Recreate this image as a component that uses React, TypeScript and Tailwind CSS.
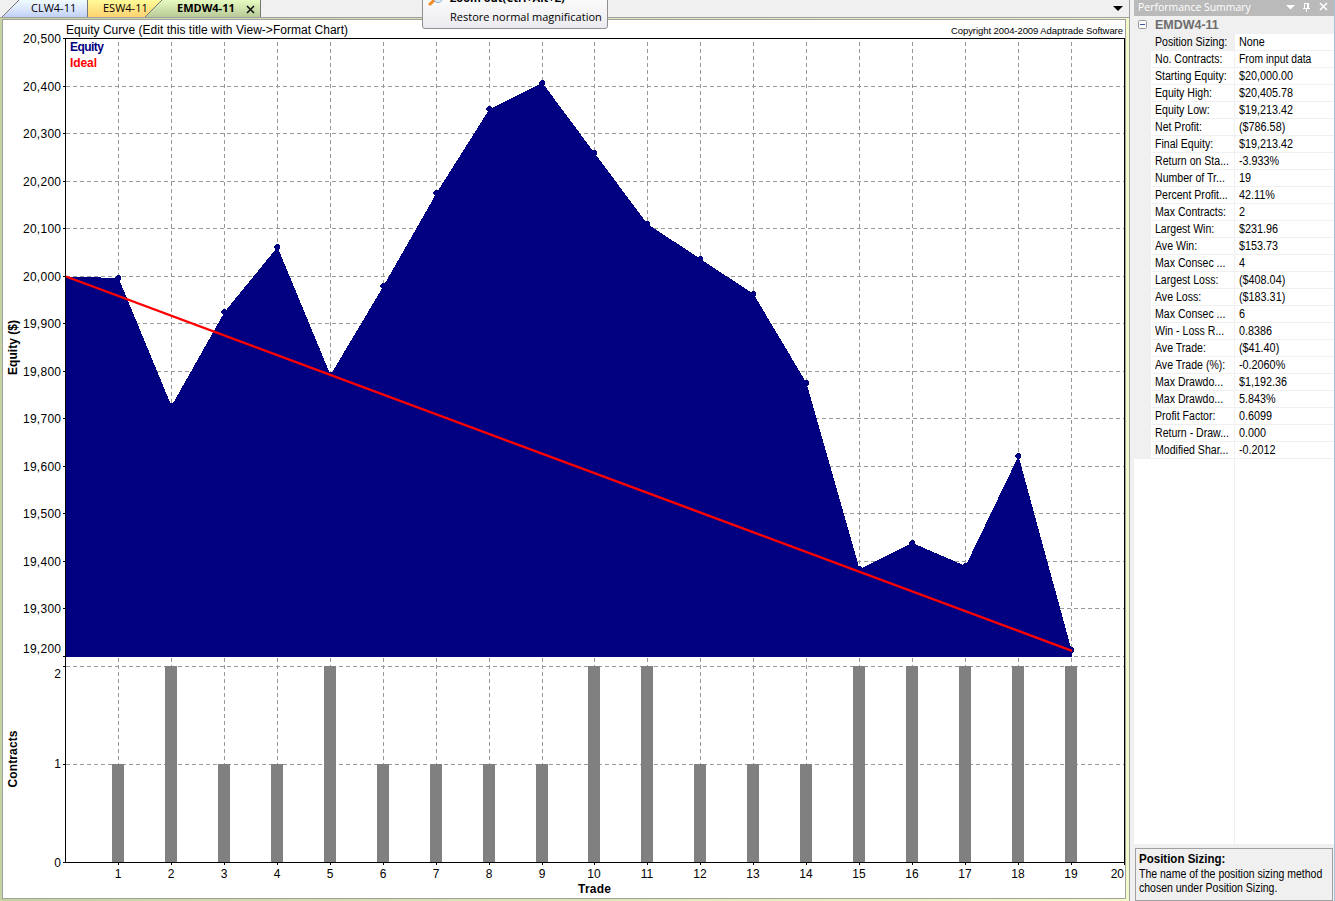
import React from 'react';

interface Metric {
  label: string;
  value: string;
}

const metrics: Metric[] = [
  { label: 'Position Sizing:', value: 'None' },
  { label: 'No. Contracts:', value: 'From input data' },
  { label: 'Starting Equity:', value: '$20,000.00' },
  { label: 'Equity High:', value: '$20,405.78' },
  { label: 'Equity Low:', value: '$19,213.42' },
  { label: 'Net Profit:', value: '($786.58)' },
  { label: 'Final Equity:', value: '$19,213.42' },
  { label: 'Return on Sta...', value: '-3.933%' },
  { label: 'Number of Tr...', value: '19' },
  { label: 'Percent Profit...', value: '42.11%' },
  { label: 'Max Contracts:', value: '2' },
  { label: 'Largest Win:', value: '$231.96' },
  { label: 'Ave Win:', value: '$153.73' },
  { label: 'Max Consec ...', value: '4' },
  { label: 'Largest Loss:', value: '($408.04)' },
  { label: 'Ave Loss:', value: '($183.31)' },
  { label: 'Max Consec ...', value: '6' },
  { label: 'Win - Loss R...', value: '0.8386' },
  { label: 'Ave Trade:', value: '($41.40)' },
  { label: 'Ave Trade (%):', value: '-0.2060%' },
  { label: 'Max Drawdo...', value: '$1,192.36' },
  { label: 'Max Drawdo...', value: '5.843%' },
  { label: 'Profit Factor:', value: '0.6099' },
  { label: 'Return - Draw...', value: '0.000' },
  { label: 'Modified Shar...', value: '-0.2012' },
];

// y position of the equity curve after each trade
const equity = [
  276.5, 278, 406, 312, 247, 375, 286, 193, 109, 83, 153, 224, 259, 294, 383, 569, 543, 566, 456, 650,
];
const contracts = [1, 2, 1, 1, 2, 1, 1, 1, 1, 2, 2, 1, 1, 1, 2, 2, 2, 2, 2];

const LEFT = 65.5;
const RIGHT = 1124.5;
const tradeX = (n: number) => Math.floor(LEFT + n * 52.945) + 0.5;

const equityTicks = Array.from({ length: 13 }, (_, i) => ({
  label: (20500 - i * 100).toLocaleString('en-US'),
  y: Math.floor(38.5 + i * 47.5) + 0.5,
}));

const EquityChart: React.FC = () => {
  const points = equity.map((y, i) => `${tradeX(i)},${y}`).join(' ');

  return (
    <svg
      width="1122"
      height="877"
      viewBox="3 20 1122 877"
      className="block font-['Liberation_Sans',sans-serif] text-[12px]"
    >
      <text x="66" y="34" textLength="282">Equity Curve (Edit this title with View-&gt;Format Chart)</text>
      <text x="951" y="34" fontSize="9.5" textLength="172">Copyright 2004-2009 Adaptrade Software</text>

      <g stroke="#999" strokeDasharray="4 3" shapeRendering="crispEdges">
        {equityTicks.slice(1).map((t) => (
          <line key={t.y} x1={LEFT} x2={RIGHT} y1={t.y} y2={t.y} />
        ))}
        <line x1={LEFT} x2={RIGHT} y1="656.5" y2="656.5" />
        <line x1={LEFT} x2={RIGHT} y1="666.5" y2="666.5" />
        <line x1={LEFT} x2={RIGHT} y1="764.5" y2="764.5" />
        {contracts.map((_, i) => (
          <line key={i} x1={tradeX(i + 1)} x2={tradeX(i + 1)} y1="42" y2="862" />
        ))}
      </g>

      <polygon points={`65,657 ${points} 1072,657`} fill="#000080" shapeRendering="crispEdges" />
      {equity.slice(1).map((y, i) => (
        <path
          key={i}
          d={`M${tradeX(i + 1) - 1.5} ${y - 3}h2l2 2v2l-2 2h-2l-2-2v-2z`}
          fill="#000080"
          shapeRendering="crispEdges"
        />
      ))}
      <line x1="66" y1="276.5" x2="1072" y2="650.8" stroke="#f00" strokeWidth="2.4" />

      {contracts.map((c, i) => (
        <rect
          key={i}
          x={tradeX(i + 1) - 6.5}
          y={c === 2 ? 666 : 764}
          width="12"
          height={c === 2 ? 196 : 98}
          fill="#808080"
        />
      ))}

      <g stroke="#000" shapeRendering="crispEdges">
        <path d="M63 38.5H1124.5V865M65.5 38V862.5M63 862.5H1125" fill="none" />
        {equityTicks.slice(1).map((t) => (
          <line key={t.y} x1="63" x2="66" y1={t.y} y2={t.y} />
        ))}
        <path d="M63 656.5h3M63 666.5h3M63 764.5h3" />
        {contracts.map((_, i) => (
          <line key={i} x1={tradeX(i + 1)} x2={tradeX(i + 1)} y1="862" y2="865" />
        ))}
      </g>

      <g textAnchor="end">
        {equityTicks.map((t) => (
          <text key={t.y} x="61" y={t.y + 4} textLength="38">{t.label}</text>
        ))}
        <text x="61" y="653" textLength="38">19,200</text>
        <text x="61" y="678">2</text>
        <text x="61" y="768">1</text>
        <text x="61" y="867">0</text>
        <text x="1124" y="878">20</text>
      </g>
      <g textAnchor="middle">
        {contracts.map((_, i) => (
          <text key={i} x={tradeX(i + 1) - 0.5} y="878">{i + 1}</text>
        ))}
      </g>
      <g fontWeight="bold">
        <text x="70" y="51" fill="#000080" textLength="34">Equity</text>
        <text x="70" y="67" fill="#f00" textLength="27">Ideal</text>
        <text x="578" y="893" textLength="33">Trade</text>
        <text transform="translate(17 375) rotate(-90)" textLength="55">Equity ($)</text>
        <text transform="translate(17 787.5) rotate(-90)" textLength="57">Contracts</text>
      </g>
    </svg>
  );
};

const TabBar: React.FC = () => (
  <div className="relative flex h-[17px] bg-[#f0f0f0] font-['Open_Sans',sans-serif] text-[11px] leading-[15px]">
    <svg width="262" height="17" className="absolute left-0 top-0">
      <defs>
        <linearGradient id="blue" x2="0" y2="1">
          <stop stopColor="#f0fbff" />
          <stop offset=".5" stopColor="#dde8fd" />
          <stop offset="1" stopColor="#c0d0f4" />
        </linearGradient>
        <linearGradient id="yellow" x2="0" y2="1">
          <stop stopColor="#fffb98" />
          <stop offset="1" stopColor="#ffd271" />
        </linearGradient>
        <linearGradient id="green" x2="0" y2="1">
          <stop stopColor="#e6fbc0" />
          <stop offset="1" stopColor="#b9ca98" />
        </linearGradient>
      </defs>
      <path d="M2 17L19 0H87V17z" fill="url(#blue)" />
      <path d="M88 17V0H162L145 17z" fill="url(#yellow)" />
      <path d="M145 17L162 0H260V17z" fill="url(#green)" />
      <path d="M2 17L19 0M87.5 0V17M145 17L162 0M260.5 0V17" stroke="#777" fill="none" />
    </svg>
    <span className="relative ml-[31px] w-[72px]">CLW4-11</span>
    <span className="relative w-[74px]">ESW4-11</span>
    <span className="relative w-[69px] font-bold">EMDW4-11</span>
    <svg width="9" height="9" className="relative mt-[5px]">
      <path d="M1 1L8 8M8 1L1 8" stroke="#111" strokeWidth="1.6" />
    </svg>
    <svg width="10" height="5" className="ml-auto mr-[6px] mt-[6px]">
      <path d="M0 0H10L5 5z" />
    </svg>
  </div>
);

const MagnificationTip: React.FC = () => (
  <div className="absolute left-[422px] top-[-10px] h-[39px] w-[186px] rounded-[3px] border border-[#8f8f8f] bg-gradient-to-b from-white to-[#ececf0] pl-[27px] font-['Open_Sans',sans-serif] text-[11px] leading-[19px]">
    <svg width="18" height="18" className="absolute left-[4px] top-0">
      <path d="M2 14L8 8.500" stroke="#f08a24" strokeWidth="3" />
      <circle cx="11" cy="7" r="4.500" fill="#dcecf8" stroke="#8bafc9" />
    </svg>
    <div className="-mt-[3px] whitespace-nowrap font-bold">Zoom out(Ctrl+Alt+Z)</div>
    <div className="whitespace-nowrap">Restore normal magnification</div>
  </div>
);

const SummaryPanel: React.FC = () => (
  <div className="flex w-[205px] flex-col border-r border-[#a9c1dc] bg-[#f0f0f0] pl-[4px] font-['Liberation_Sans',sans-serif] text-[12px]">
    <div className="flex h-[16px] bg-[#bababa] pl-[4px] font-['Open_Sans',sans-serif] text-[11px] leading-[14px] text-white">
      <span className="origin-left scale-x-[.95] whitespace-nowrap">Performance Summary</span>
      <svg width="42" height="10" className="ml-auto mr-[6px] mt-[2px]">
        <path d="M0 3H9L4.500 7.500z" fill="#fff" />
        <path d="M18.500 6V1.500H22.500V6M21.500 1v5M17 6.500H24M20.500 7v3" fill="none" stroke="#fff" shapeRendering="crispEdges" />
        <path d="M34 1L41 8M41 1L34 8" stroke="#fff" strokeWidth="1.600" />
      </svg>
    </div>
    <div className="flex h-[18px]">
      <svg width="9" height="9" className="ml-[4px] mt-[4px]">
        <rect x=".5" y=".5" width="8" height="8" rx="1" fill="#fafafa" stroke="#999" />
        <path d="M2 4.500h5" stroke="#3a55a0" />
      </svg>
      <span className="ml-[8px] origin-left scale-x-[1.04] font-bold leading-[18px] text-[#6d6d6d]">EMDW4-11</span>
    </div>
    <div className="flex flex-1 flex-col bg-white">
      {metrics.map((m, i) => (
        <div key={i} className="flex h-[17px] leading-[16px]">
          <div className="w-[17px] bg-[#f0f0f0]" />
          <div className={`w-[84px] border-b border-r border-[#f0f0f0] pl-[4px] ${i === 0 ? 'bg-[#f0f0f0]' : ''}`}>
            <span className="block origin-left scale-x-[.88] whitespace-nowrap">{m.label}</span>
          </div>
          <div className="flex-1 border-b border-[#f0f0f0] pl-[4px]">
            <span
              className={`block origin-left whitespace-nowrap ${i === 1 ? 'scale-x-[.86]' : 'scale-x-[.9]'}`}
            >
              {m.value}
            </span>
          </div>
        </div>
      ))}
      <div className="w-[101px] flex-1 border-r border-[#f0f0f0]" />
    </div>
    <div className="ml-px mr-px mt-[4px] h-[53px] border border-[#a0a0a0] pl-[3px] pt-[3px] leading-[14px]">
      <div className="h-[15px] origin-left scale-x-[.96] whitespace-nowrap font-bold">Position Sizing:</div>
      <div className="origin-left scale-x-[.875] whitespace-nowrap">
        The name of the position sizing method
        <br />
        chosen under Position Sizing.
      </div>
    </div>
  </div>
);

const App: React.FC = () => (
  <div className="relative flex h-[901px] w-[1335px] overflow-hidden bg-[#f0f0f0] text-black">
    <div className="flex w-[1130px] flex-col border-r border-[#a0a0a0]">
      <TabBar />
      <div className="flex-1 border-t border-[#a0a0a0] bg-gradient-to-r from-[#c5d3a3] to-[#f4fbc8] pb-[2px] pl-[2px] pr-[3px] pt-px">
        <div className="h-[880px] border border-[#a0a0a0] bg-white">
          <EquityChart />
        </div>
      </div>
    </div>
    <SummaryPanel />
    <MagnificationTip />
  </div>
);

export default App;
